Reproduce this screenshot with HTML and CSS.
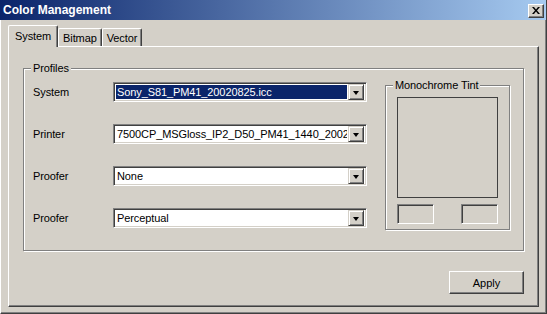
FILE: index.html
```html
<!DOCTYPE html>
<html>
<head>
<meta charset="utf-8">
<link rel="stylesheet" href="styles.css">
</head>
<body>
<div class="window">
  <div class="titlebar">
    <span class="title">Color Management</span>
    <span class="close"><svg width="8" height="7" viewBox="0 0 8 7"><path d="M0 0h2l2 2.5 2-2.5h2l-3 3.5 3 3.5h-2l-2-2.5-2 2.5h-2l3-3.5z" fill="#000"/></svg></span>
  </div>
  <div class="content">
    <div class="tabs">
      <div class="tab selected">System</div>
      <div class="tab">Bitmap</div>
      <div class="tab">Vector</div>
    </div>
    <div class="panel">
      <div class="group profiles">
        <span class="legend">Profiles</span>
        <div class="rows">
          <div class="row">
            <span class="label">System</span>
            <div class="combo"><span class="value sel">Sony_S81_PM41_20020825.icc</span><span class="drop"><i></i></span></div>
          </div>
          <div class="row">
            <span class="label">Printer</span>
            <div class="combo"><span class="value">7500CP_MSGloss_IP2_D50_PM41_1440_20020825.icc</span><span class="drop"><i></i></span></div>
          </div>
          <div class="row">
            <span class="label">Proofer</span>
            <div class="combo"><span class="value">None</span><span class="drop"><i></i></span></div>
          </div>
          <div class="row">
            <span class="label">Proofer</span>
            <div class="combo"><span class="value">Perceptual</span><span class="drop"><i></i></span></div>
          </div>
        </div>
        <div class="group tint">
          <span class="legend">Monochrome Tint</span>
          <div class="swatch"></div>
          <div class="fields">
            <div class="field"></div>
            <div class="field"></div>
          </div>
        </div>
      </div>
      <div class="actions">
        <button class="btn">Apply</button>
      </div>
    </div>
  </div>
</div>
</body>
</html>
```
FILE: styles.css
```css
* { box-sizing: border-box; }
html, body { margin: 0; padding: 0; }
body {
  width: 547px;
  height: 314px;
  overflow: hidden;
  background: #d4d0c8;
  font-family: "Liberation Sans", Arial, sans-serif;
  font-size: 11px;
  letter-spacing: -0.1px;
  color: #000;
}
.window {
  width: 547px;
  height: 314px;
  background: #d4d0c8;
  border-left: 1px solid #fff;
  border-right: 1px solid #404040;
  border-bottom: 1px solid #404040;
  box-shadow: inset -1px -1px 0 #808080;
  display: flex;
  flex-direction: column;
}
.titlebar {
  height: 20px;
  margin-left: -1px;
  background: linear-gradient(to right, #0a246a 0%, #a6caf0 100%);
  display: flex;
  align-items: center;
  justify-content: space-between;
  padding: 0 2px 0 3px;
}
.title {
  color: #fff;
  font-weight: bold;
  font-size: 12px;
  letter-spacing: 0;
}
.close {
  width: 16px;
  height: 14px;
  background: #d4d0c8;
  border-top: 1px solid #fff;
  border-left: 1px solid #fff;
  border-right: 1px solid #404040;
  border-bottom: 1px solid #404040;
  box-shadow: inset -1px -1px 0 #808080;
  display: flex;
  align-items: center;
  justify-content: center;
  margin-top: 1px;
}
.content {
  padding: 5px 7px 0 7px;
}
.tabs {
  display: flex;
  align-items: flex-end;
  height: 21px;
  position: relative;
  z-index: 1;
  padding-left: 2px;
}
.tab {
  height: 18px;
  padding: 2px 4px 0 4px;
  border-top: 1px solid #fff;
  border-left: 1px solid #fff;
  border-right: 1px solid #404040;
  box-shadow: inset -1px 0 0 #808080;
  border-radius: 2px 2px 0 0;
  line-height: 14px;
}
.tab.selected {
  height: 22px;
  margin-bottom: -1px;
  margin-left: -2px;
  margin-right: -2px;
  padding: 3px 6px 0 6px;
  background: #d4d0c8;
  position: relative;
  z-index: 2;
}
.tab.selected + .tab { margin-left: 2px; }
.panel {
  width: 531px;
  height: 261px;
  border-top: 1px solid #fff;
  border-left: 1px solid #fff;
  border-right: 1px solid #404040;
  border-bottom: 1px solid #404040;
  box-shadow: inset -1px -1px 0 #808080;
  padding: 21px 13px 0 14px;
  display: flex;
  flex-direction: column;
}
.group {
  position: relative;
  border: 1px solid #808080;
  box-shadow: inset 1px 1px 0 #fff, 1px 1px 0 #fff;
}
.legend {
  position: absolute;
  top: -8px;
  left: 7px;
  padding: 0 2px;
  background: #d4d0c8;
  line-height: 14px;
}
.profiles {
  width: 501px;
  height: 183px;
  display: flex;
  align-items: flex-start;
  padding: 13px 0 0 9px;
}
.rows {
  display: flex;
  flex-direction: column;
  gap: 22px;
}
.row {
  display: flex;
  align-items: center;
  height: 20px;
}
.label {
  width: 80px;
}
.combo {
  width: 254px;
  height: 20px;
  background: #fff;
  border-top: 1px solid #808080;
  border-left: 1px solid #808080;
  border-right: 1px solid #fff;
  border-bottom: 1px solid #fff;
  box-shadow: inset 1px 1px 0 #404040, inset -1px -1px 0 #d4d0c8;
  padding: 2px;
  display: flex;
}
.value {
  flex: 1;
  min-width: 0;
  overflow: hidden;
  white-space: nowrap;
  line-height: 14px;
  padding: 0 1px;
  margin-right: 1px;
}
.value.sel {
  background: #0a246a;
  color: #fff;
}
.drop {
  width: 16px;
  height: 16px;
  flex: none;
  background: #d4d0c8;
  border-top: 1px solid #d4d0c8;
  border-left: 1px solid #d4d0c8;
  border-right: 1px solid #404040;
  border-bottom: 1px solid #404040;
  box-shadow: inset 1px 1px 0 #fff, inset -1px -1px 0 #808080;
  margin-top: -1px;
  display: flex;
  align-items: center;
  justify-content: center;
}
.drop i {
  width: 0;
  height: 0;
  border-left: 3.5px solid transparent;
  border-right: 3.5px solid transparent;
  border-top: 4px solid #000;
  margin-top: 1px;
}
.tint {
  width: 125px;
  height: 145px;
  margin: 3px 0 0 18px;
  padding: 11px 11px 0 11px;
}
.swatch {
  width: 101px;
  height: 101px;
  border: 1px solid #404040;
}
.fields {
  display: flex;
  justify-content: space-between;
  margin-top: 6px;
}
.field {
  width: 37px;
  height: 20px;
  border-top: 1px solid #808080;
  border-left: 1px solid #808080;
  border-right: 1px solid #fff;
  border-bottom: 1px solid #fff;
  box-shadow: inset 1px 1px 0 #404040;
}
.actions {
  display: flex;
  justify-content: flex-end;
  width: 501px;
  margin-top: 20px;
}
.btn {
  width: 75px;
  height: 23px;
  font-family: "Liberation Sans", Arial, sans-serif;
  font-size: 11px;
  color: #000;
  background: #d4d0c8;
  border-top: 1px solid #fff;
  border-left: 1px solid #fff;
  border-right: 1px solid #404040;
  border-bottom: 1px solid #404040;
  box-shadow: inset -1px -1px 0 #808080;
  padding: 0;
}
```
